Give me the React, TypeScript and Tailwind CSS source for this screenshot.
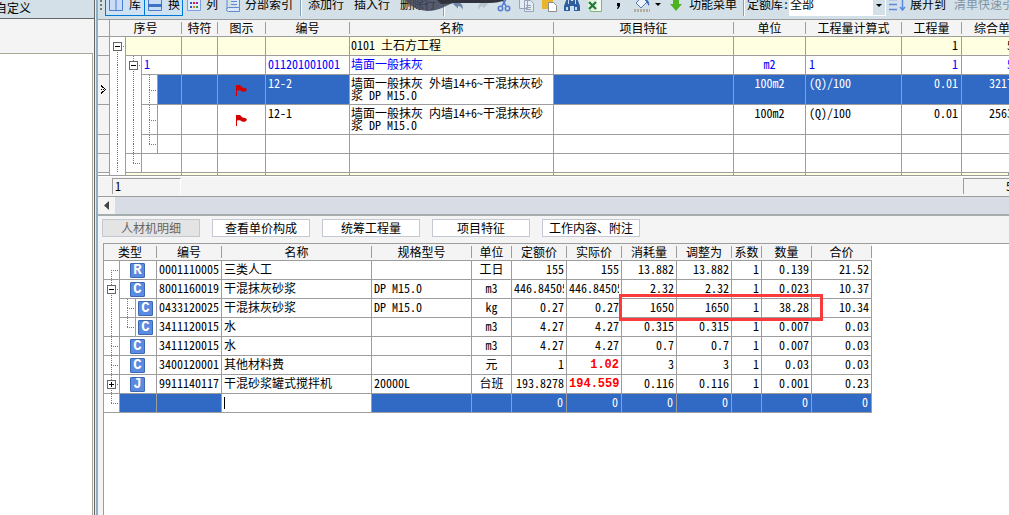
import React from 'react';
import clsx from 'clsx';

/* hwid: Latin runs are half the width of a Chinese character */
const FONT = "font-['Noto_Sans_CJK_SC',monospace] [font-feature-settings:'hwid']";

type NodeKind = 'minus' | 'plus' | 'line' | 'branch' | 'end' | 'start' | 'top';

const Tree: React.FC<{ kind: NodeKind; h?: number }> = ({ kind, h = 18 }) => {
  const mid = h > 19 ? 15 : 9;
  const box = kind === 'minus' || kind === 'plus' || kind === 'top';
  const up = kind !== 'start' && kind !== 'top';
  const down = kind !== 'end';
  return (
    <svg width="15" height={h} className="block" shapeRendering="crispEdges" fill="none">
      <g stroke="#777" strokeDasharray="1 1">
        {up && <path d={`M7.5 0V${mid}`} />}
        {down && <path d={`M7.5 ${mid}V${h + 1}`} />}
        {kind !== 'line' && <path d={`M7 ${mid + 0.5}H15`} />}
      </g>
      {box && <rect x="3.5" y="5.5" width="8" height="8" fill="#fff" stroke="#666" />}
      {box && <path d="M5 9.5H10" stroke="#000" />}
      {kind === 'plus' && <path d="M7.5 7V12" stroke="#000" />}
    </svg>
  );
};

const Flag = () => (
  <svg width="13" height="12" viewBox="0 0 13 12" className="mt-2 ml-[17px] block">
    <path d="M1 0H5L7.5 2.5L11 3.2L12 5L10 6.8H7.5L5 5.2L2 5.5V11H1Z" fill="#d40000" />
  </svg>
);

const HeadCell: React.FC<{ label: string; span?: number; left?: boolean }> = ({ label, span = 1, left }) => (
  <th colSpan={span} scope="col" className="h-[17px] border-b border-[#9d9d9d] bg-[#f4f4f4] p-0 font-normal">
    <div className={clsx('flex h-4 items-center overflow-hidden leading-[16px] whitespace-nowrap', left && 'pl-3 text-left')}>
      <span className="flex-1">{label}</span>
      <span className="h-3 w-px bg-[#9d9d9d]" />
    </div>
  </th>
);

const line = 'border-r border-b border-[#9d9d9d] p-0 align-top';

const topCols = ['特符', '图示', '编号', '名称', '项目特征', '单位', '工程量计算式', '工程量'];

interface TopRow {
  cells: string[];
  tone?: string;
  tall?: boolean;
  selected?: boolean;
  flag?: boolean;
  span: number;
  tree: (NodeKind | null)[];
}

const topRows: TopRow[] = [
  { span: 3, tree: ['top'], tone: 'bg-[#ffffe1]', cells: ['', '', '', '', '0101 土石方工程', '', '', '', '1', '   5'] },
  { span: 2, tree: ['line', 'minus'], tone: 'text-[#0000ff]', cells: ['1', '', '', '011201001001', '墙面一般抹灰', '', 'm2', '1', '1', '   5'] },
  {
    span: 1, tree: ['line', 'line', 'branch'], tall: true, selected: true, flag: true, tone: 'bg-[#316ac5] text-white',
    cells: ['', '', '', '12-2', '墙面一般抹灰 外墙14+6~干混抹灰砂浆 DP M15.0', '', '100m2', '(Q)/100', '0.01', '3217'],
  },
  {
    span: 1, tree: ['line', 'line', 'branch'], tall: true, flag: true,
    cells: ['', '', '', '12-1', '墙面一般抹灰 内墙14+6~干混抹灰砂浆 DP M15.0', '', '100m2', '(Q)/100', '0.01', '2563'],
  },
  { span: 1, tree: ['line', 'line', 'end'], cells: Array(10).fill('') },
  { span: 2, tree: ['line', 'end'], cells: Array(10).fill('') },
];

const TopGrid = () => (
  <table className="w-full table-fixed border-separate border-spacing-0 bg-white">
    <colgroup>
      <col className="w-3" />
      <col className="w-4" />
      <col className="w-4" />
      <col className="w-4" />
      <col className="w-6" />
      <col className="w-9" />
      <col className="w-12" />
      <col className="w-[84px]" />
      <col className="w-[204px]" />
      <col className="w-[180px]" />
      <col className="w-[72px]" />
      <col className="w-24" />
      <col className="w-[60px]" />
      <col />
    </colgroup>
    <thead>
      <tr>
        <td className="border-r border-b border-[#9d9d9d] bg-[#f4f4f4] p-0" />
        <HeadCell label="序号" span={4} />
        {topCols.map((c) => <HeadCell key={c} label={c} />)}
        <HeadCell label="综合单价" left />
      </tr>
    </thead>
    <tbody>
      {topRows.map((row, r) => (
        <tr key={r}>
          <td className={clsx(line, 'bg-[#f4f4f4]')}>
            {row.selected && (
              <svg width="11" height="29" className="block" shapeRendering="crispEdges">
                <path d="M3 10h1v2h-1zM4 11h1v2h-1zM5 12h1v1h-1zM6 13h1v1h-1zM7 14h1v1h-1zM6 15h1v1h-1zM5 16h1v1h-1zM4 16h1v2h-1zM3 17h1v2h-1zM3 14h1v1h-1zM5 14h1v1h-1z" />
              </svg>
            )}
          </td>
          {row.tree.map((kind, i) => {
            const ruled = i === 2 || (i === 1 && r >= 4);
            return (
              <td key={i} className={clsx('border-r border-[#9d9d9d] p-0 align-top', ruled && 'border-b')}>
                {kind && <Tree kind={kind} h={(row.tall ? 29 : 18) + (ruled ? 0 : 1)} />}
              </td>
            );
          })}
          {row.cells.map((c, i) => (
            <td
              key={i}
              colSpan={i === 0 ? row.span : 1}
              className={clsx(
                i === 9 ? 'border-b border-[#9d9d9d] p-0 align-top' : line,
                row.selected && i === 4 ? 'bg-white text-black' : row.tone
              )}
            >
              <div
                className={clsx(
                  'overflow-hidden',
                  row.tall ? 'h-[29px] pt-0.5 leading-[12px]' : 'h-[18px] leading-[16px] whitespace-pre',
                  i === 6 && 'text-center',
                  i === 8 && 'pr-[3px] text-right',
                  i === 9 && 'pl-[27px]',
                  i === 7 && 'pl-[3px]',
                  i < 6 && i !== 2 && (i === 4 ? 'pl-px' : 'pl-0.5')
                )}
              >
                {i === 2 && row.flag ? <Flag /> : c}
              </div>
            </td>
          ))}
        </tr>
      ))}
      <tr className="h-[3px]">
        <td className={line} />
        <td className={line} />
        <td colSpan={3} className={clsx(line, 'bg-[#ffffe1]')} />
        {Array.from({ length: 9 }, (_, i) => <td key={i} className={clsx(line, 'bg-[#ffffe1]')} />)}
      </tr>
    </tbody>
  </table>
);

const tabs = ['人材机明细', '查看单价构成', '统筹工程量', '项目特征', '工作内容、附注'];

const detailCols = ['编号', '名称', '规格型号', '单位', '定额价', '实际价', '消耗量', '调整为', '系数', '数量', '合价'];

interface DetailRow {
  tree: NodeKind;
  child?: NodeKind;
  type: string;
  red?: boolean;
  cells: string[];
}

const detailRows: DetailRow[] = [
  { tree: 'start', type: 'R', cells: ['0001110005', '三类人工', '', '工日', '155', '155', '13.882', '13.882', '1', '0.139', '21.52'] },
  { tree: 'minus', type: 'C', cells: ['8001160019', '干混抹灰砂浆', 'DP M15.0', 'm3', '446.84505', '446.84505', '2.32', '2.32', '1', '0.023', '10.37'] },
  { tree: 'line', child: 'branch', type: 'C', cells: ['0433120025', '干混抹灰砂浆', 'DP M15.0', 'kg', '0.27', '0.27', '1650', '1650', '1', '38.28', '10.34'] },
  { tree: 'line', child: 'end', type: 'C', cells: ['3411120015', '水', '', 'm3', '4.27', '4.27', '0.315', '0.315', '1', '0.007', '0.03'] },
  { tree: 'branch', type: 'C', cells: ['3411120015', '水', '', 'm3', '4.27', '4.27', '0.7', '0.7', '1', '0.007', '0.03'] },
  { tree: 'branch', type: 'C', red: true, cells: ['3400120001', '其他材料费', '', '元', '1', '1.02', '3', '3', '1', '0.03', '0.03'] },
  { tree: 'plus', type: 'J', red: true, cells: ['9911140117', '干混砂浆罐式搅拌机', '20000L', '台班', '193.8278', '194.5590', '0.116', '0.116', '1', '0.001', '0.23'] },
];

const DetailGrid = () => (
  <table className="w-[768px] table-fixed border-separate border-spacing-0">
    <colgroup>
      <col className="w-4" />
      <col className="w-4" />
      <col className="w-[21px]" />
      <col className="w-[65px]" />
      <col className="w-[150px]" />
      <col className="w-[100px]" />
      <col className="w-10" />
      <col className="w-[55px]" />
      <col className="w-[55px]" />
      <col className="w-[55px]" />
      <col className="w-[55px]" />
      <col className="w-[30px]" />
      <col className="w-[50px]" />
      <col className="w-[60px]" />
    </colgroup>
    <thead>
      <tr>
        <HeadCell label="类型" span={3} />
        {detailCols.map((c) => <HeadCell key={c} label={c} />)}
      </tr>
    </thead>
    <tbody>
      {detailRows.map((row, r) => {
        const open = r === 1 || r === 2;
        return (
          <tr key={r}>
            <td className={clsx('border-r border-[#9d9d9d] p-0 align-top', !open && 'border-b')}>
              <Tree kind={row.tree} h={open ? 19 : 18} />
            </td>
            {row.child && (
              <td className={line}>
                <Tree kind={row.child} />
              </td>
            )}
            <td colSpan={row.child ? 1 : 2} className={line}>
              <div className={clsx('flex h-[18px] items-center', row.child ? 'pl-0.5' : 'pl-2.5')}>
                <span className="flex h-[15px] w-[15px] items-center justify-center rounded-[1px] border border-[#3c68b4] bg-[#5b8be0] font-['Liberation_Mono',monospace] text-sm leading-none font-bold text-white">
                  {row.type}
                </span>
              </div>
            </td>
            {row.cells.map((c, i) => (
              <td key={i} className={line}>
                <div
                  className={clsx(
                    'h-[18px] overflow-hidden whitespace-nowrap',
                    i < 3 && 'pl-0.5',
                    i === 3 && 'text-center',
                    i > 3 && 'mx-0.5 text-right',
                    row.red && i === 5
                      ? "font-['Liberation_Mono',monospace] leading-[18px] font-bold text-[#ff0000]"
                      : 'leading-[16px]'
                  )}
                >
                  {c}
                </div>
              </td>
            ))}
          </tr>
        );
      })}
      <tr className="text-white">
        <td className={line}><Tree kind="end" /></td>
        <td colSpan={2} className={clsx(line, 'bg-[#316ac5]')} />
        {['', 'edit', '', '', '0', '0', '0', '0', '', '0', '0'].map((c, i) => (
          <td key={i} className={clsx(line, c === 'edit' ? 'bg-white' : 'bg-[#316ac5]')}>
            {c === 'edit' ? (
              <div className="flex h-[18px] items-center pl-0.5">
                <span className="h-3 w-px bg-black" />
                <input aria-label="名称" className="h-4 w-full text-black outline-none" />
              </div>
            ) : (
              <div className="h-[18px] pr-[3px] text-right leading-[16px]">{c}</div>
            )}
          </td>
        ))}
      </tr>
    </tbody>
  </table>
);

const Sep = ({ className }: { className: string }) => (
  <span className={clsx('h-6 w-0.5 shrink-0 border-l border-[#7fa3b8] bg-white', className)} />
);

const toolBtn = 'flex h-6 shrink-0 items-center whitespace-nowrap';

const Toolbar = () => (
  <div className="relative h-[19px] overflow-hidden bg-[#d3e0e8]">
    <div className="-mt-2 flex h-6 items-center">
      <svg width="7" height="24" className="shrink-0" fill="#777">
        <path d="M2 8h2v2H2zM2 12h2v2H2zM2 16h2v2H2z" />
      </svg>
      <button className={clsx(toolBtn, 'w-10 gap-1.5 border border-[#0078d7] bg-[#cfe2f2] pl-[3px]')}>
        <svg width="14" height="14" fill="#c9dcf8" stroke="#4a7bd0"><path d="M.5 .5h13v13H.5zM7 .5v13" /></svg>
        库
      </button>
      <button className={clsx(toolBtn, '-ml-px w-[39px] gap-1.5 border border-[#0078d7] bg-[#cfe2f2] pl-[3px]')}>
        <svg width="14" height="14" fill="#c9dcf8" stroke="#4a7bd0"><path d="M.5 .5h13v13H.5z" /><path d="M0 8.5h14" strokeWidth="3" stroke="#3d71c9" /></svg>
        换
      </button>
      <button className={clsx(toolBtn, 'ml-1 w-9 gap-[5px]')}>
        <svg width="14" height="14">
          <path d="M.5 .5h13v13H.5z" fill="#e4eefb" stroke="#7d9fe0" />
          <path d="M3 5h2v2H3zM3 9h2v2H3z" fill="#2b55c8" />
          <path d="M6 5h2v2H6z" fill="#e02020" /><path d="M9 5h2v2H9z" fill="#a020c0" />
          <path d="M6 9h2v2H6z" fill="#e08020" /><path d="M9 9h2v2H9z" fill="#20a040" />
        </svg>
        列
      </button>
      <button className={clsx(toolBtn, 'ml-[3px] w-[70px] gap-[5px]')}>
        <svg width="14" height="15" fill="#dbe7fa" stroke="#6288d0">
          <path d="M2.5 .5h11v10h-11a2 2 0 0 0 0 4h11v-4M1 12V2" /><path d="M5 4.5h6M5 7.5h6" />
        </svg>
        分部索引
      </button>
      <Sep className="ml-1" />
      <button className={clsx(toolBtn, 'ml-1.5')}>添加行</button>
      <button className={clsx(toolBtn, 'ml-2.5')}>插入行</button>
      <button className={clsx(toolBtn, 'ml-2.5')}>删除行</button>
      <Sep className="ml-[7px]" />
      <button aria-label="撤销" className={clsx(toolBtn, 'ml-2 w-6')}>
        <svg width="12" height="16" fill="#7188aa"><path d="M0 8L5 4V6.5Q11 7 9.500 14Q8.500 10 5 10V12.500Z" /></svg>
      </button>
      <button aria-label="重做" className={clsx(toolBtn, 'w-5')}>
        <svg width="12" height="16" fill="#b7c3ce"><path d="M11 8L6 4V6.500Q0 7 1.500 14Q3 10 6 10V12.500Z" /></svg>
      </button>
      <button aria-label="剪切" className={clsx(toolBtn, 'w-[22px]')}>
        <svg width="14" height="16" fill="none" stroke="#5b7fd0" strokeWidth="1.600">
          <path d="M3 0L9 10M11 0L5 10" /><circle cx="3.500" cy="12.500" r="2.200" /><circle cx="10.500" cy="12.500" r="2.200" />
        </svg>
      </button>
      <button aria-label="复制" className={clsx(toolBtn, 'w-[23px]')}>
        <svg width="15" height="15" fill="#e6eaf1" stroke="#96a3b9">
          <path d="M.5 .5h8v11h-8zM5.500 3.500h6l3 3v8h-9z" /><path d="M7 8.500h5M7 10.500h5M7 12.500h5" />
        </svg>
      </button>
      <button aria-label="粘贴" className={clsx(toolBtn, 'w-[22px]')}>
        <svg width="15" height="16"><path d="M0 1h11v12H0z" fill="#e9b52c" /><path d="M6.500 6.500h5l3 3v6h-8z" fill="#fff" stroke="#8b8b8b" /></svg>
      </button>
      <button aria-label="查找" className={clsx(toolBtn, 'w-6')}>
        <svg width="16" height="15" fill="#2f5f9e">
          <path d="M3 1h3l1 3h2l1-3h3l3 8v5h-6V9H6v5H0V9z" /><path d="M2 10h2v3H2zM11 10h2v3h-2zM4 3h1v4H4zM11 3h1v4h-1z" fill="#c8dcf2" />
        </svg>
      </button>
      <button aria-label="导出 Excel" className={clsx(toolBtn, 'w-7')}>
        <svg width="14" height="15">
          <path d="M2.500 .5h11v14h-11z" fill="#f3faf0" stroke="#7fb47c" /><path d="M0 3h9v10H0z" fill="#e2f2dd" />
          <path d="M1 5L8 12M8 5L1 12" stroke="#207b3a" strokeWidth="2.200" />
        </svg>
      </button>
      <svg width="17" height="14" className="shrink-0"><path d="M1 6h3v3L2 12H1L2 9H1Z" /></svg>
      <button aria-label="填充颜色" className={clsx(toolBtn, 'w-[37px] gap-1')}>
        <svg width="18" height="17">
          <path d="M3 7L9 1L14 6L8 12Z" fill="#edf3fb" stroke="#5878a8" /><path d="M12 3Q17 4 16 10L14 7Z" fill="#3267b4" />
          <path d="M1 14.500H17" stroke="#b5ad9c" strokeWidth="3" strokeDasharray="2 1" />
        </svg>
        <svg width="6" height="3"><path d="M0 0H6L3 3Z" /></svg>
      </button>
      <button className={clsx(toolBtn, 'gap-[7px]')}>
        <svg width="12" height="15"><path d="M3 0H9V7H12L6 14L0 7H3Z" fill="#4db321" /></svg>
        功能菜单
      </button>
      <Sep className="ml-1.5" />
      <label htmlFor="lib" className="ml-0.5 shrink-0 whitespace-nowrap">定额库:</label>
      <div className="relative h-6 w-[97px] shrink-0 border border-white bg-white">
        <select id="lib" className="h-full w-full appearance-none outline-none">
          <option>全部</option>
        </select>
        <svg width="12" height="22" className="absolute top-0 right-0">
          <path d="M0 0H12V22H0z" fill="#d3e0e8" /><path d="M3 11H9L6 14Z" />
        </svg>
      </div>
      <button className={clsx(toolBtn, 'ml-[3px] gap-1')}>
        <svg width="17" height="15" fill="none" stroke="#5a89e0" strokeWidth="1.500">
          <path d="M0 2.500H8M0 7.500H8M0 12.500H8M13.500 2V13M11 10L13.500 13L16 10" />
        </svg>
        展开到
      </button>
      <button className={clsx(toolBtn, 'ml-2 text-[#7f95a5]')}>清单快速引</button>
    </div>
    {/* bottom edge of a floating widget hanging over the toolbar */}
    <svg width="106" height="12" className="pointer-events-none absolute top-0 left-[303px]">
      <path d="M4 0H60Q50 3 43 7Q35 11 26 11Q12 10 4 0Z" fill="#3f4459" fillOpacity=".85" />
      <path d="M36 0H104Q98 3 88 3H54Q46 4 40 4Z" fill="#30333c" />
    </svg>
  </div>
);

const Sunken: React.FC<{ className: string; children: string }> = ({ className, children }) => (
  <div className={clsx('h-4 border-t border-l border-[#9d9d9d] leading-[14px]', className)}>{children}</div>
);

const App: React.FC = () => {
  return (
    <div className={clsx('flex h-screen overflow-hidden bg-[#f4f4f4] text-xs text-black', FONT)}>
      <aside className="flex w-[95px] shrink-0 flex-col border-r border-[#666] bg-[#f4f4f4]">
        <div className="h-[19px] shrink-0 overflow-hidden border-b border-[#666] bg-[#d3e0e8] leading-[15px]">
          <div className="-ml-[5px]">自定义</div>
        </div>
        <div className="h-[34px] shrink-0" />
        <div className="mr-px flex-1 border-t border-r border-[#aca899] bg-white" />
      </aside>
      <div className="w-[3px] shrink-0 border-r-2 border-[#8fb0c4] bg-[#e8eff3]" />
      <main className="flex min-w-0 flex-1 flex-col">
        <Toolbar />
        <div className="border-t border-[#9d9d9d]">
          <TopGrid />
        </div>
        <div className="flex h-[21px] justify-between border-t border-b border-t-white border-b-[#9d9d9d] pt-px pl-3.5">
          <Sunken className="w-[69px] border-r border-r-white pl-0.5">1</Sunken>
          <Sunken className="w-[46px] pl-[42px]">5</Sunken>
        </div>
        <div className="flex h-[19px] border-b-2 border-[#a5adae] bg-[#d7dce5]">
          <button aria-label="向左滚动" className="flex w-[17px] items-center justify-center bg-[#f4f4f4]">
            <svg width="5" height="9"><path d="M5 0V9L0 4.500Z" fill="#444" /></svg>
          </button>
        </div>
        <div className="flex gap-3 pt-[3px] pb-1.5 pl-1">
          {tabs.map((t, i) => (
            <button
              key={t}
              className={clsx(
                'h-[18px] w-[98px] border border-[#c3c8d3] leading-[16px] whitespace-nowrap',
                i === 0 ? 'bg-[#e4e4e4] text-[#666]' : 'bg-white'
              )}
            >
              {t}
            </button>
          ))}
        </div>
        <div className="relative ml-[5px] flex-1 border-t border-l border-[#9d9d9d] bg-white">
          <DetailGrid />
          <div className="pointer-events-none absolute top-[50px] left-[515px] h-[27px] w-[204px] border-3 border-[#fb3b3b]" />
        </div>
      </main>
    </div>
  );
};

export default App;
